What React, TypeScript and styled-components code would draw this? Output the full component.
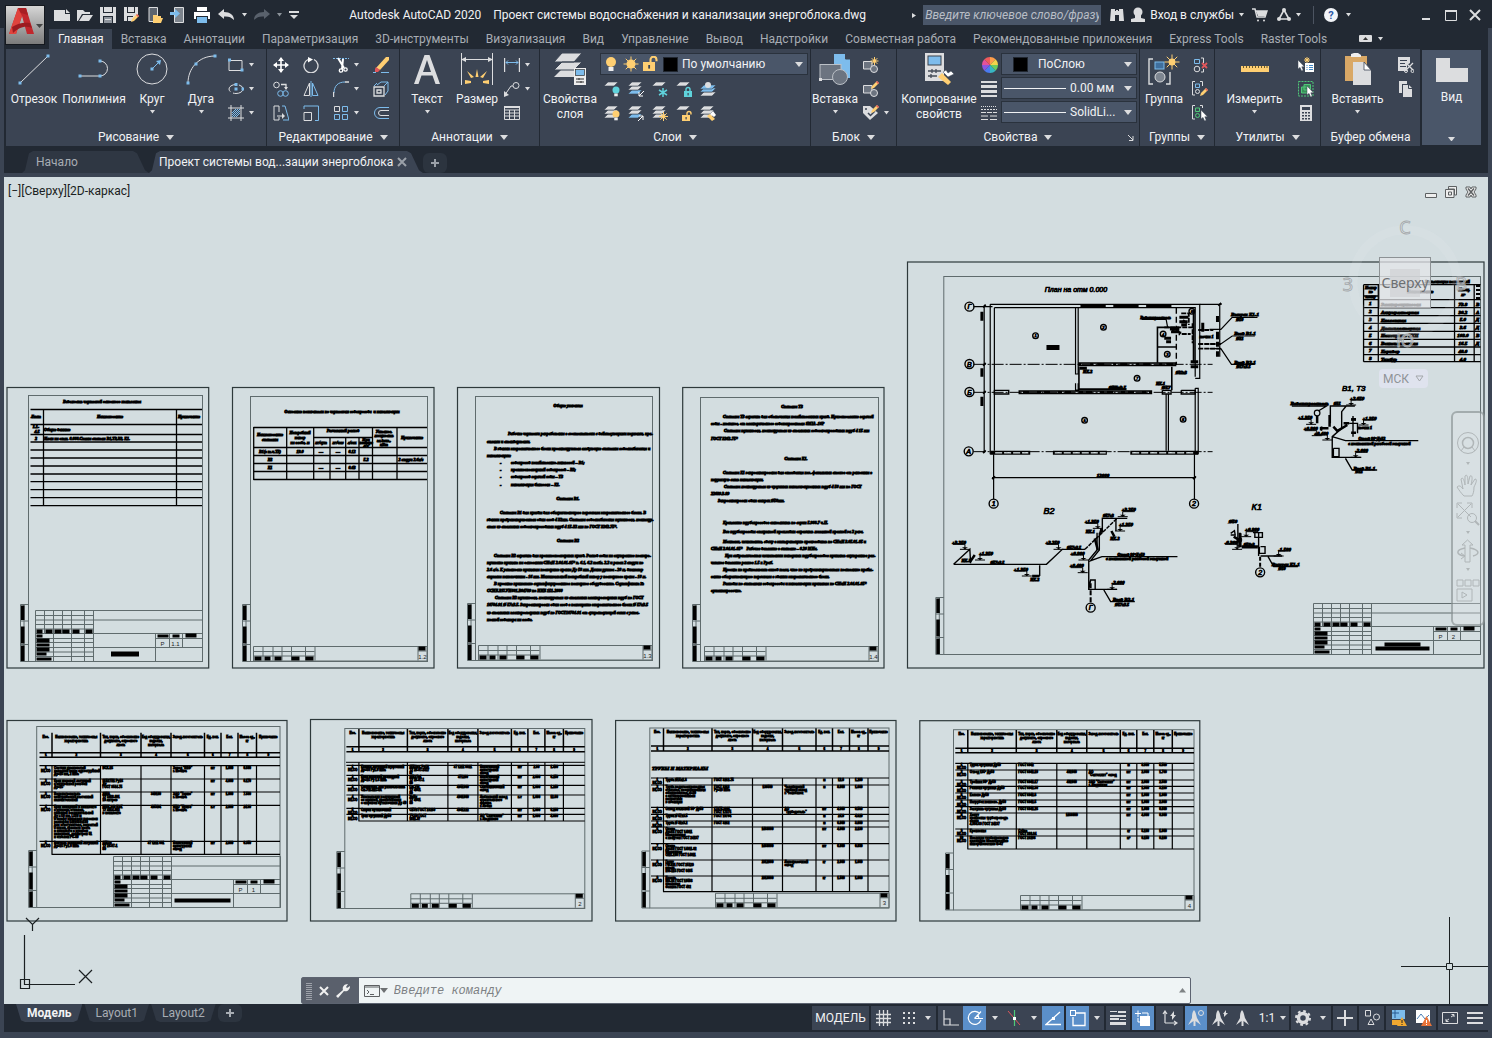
import React from "react";
import styled, { createGlobalStyle, css } from "styled-components";

const c = {
  dark: "#222933",
  panel: "#3b4453",
  field: "#4a5669",
  text: "#f1f2f4",
  muted: "#a8adb4",
  icon: "#dcdddf",
  blue: "#7dbcec",
  yellow: "#ffcf72",
  teal: "#5fd3dc",
  green: "#4fc878",
  red: "#e0565b",
  active: "#5b8fc9",
  canvas: "#d3dde0",
  thin: "#5f6b6d",
};

const GlobalStyle = createGlobalStyle`
  * { box-sizing: border-box; }
  body { margin: 0; background: ${c.dark}; font-family: Roboto, "Noto Sans", sans-serif; font-size: 12px; line-height: 16px; color: ${c.text}; }
  button, input, select { font: inherit; color: inherit; }
  svg { display: block; flex: none; }
`;

/* ---------- shell ---------- */

const Window = styled.div`
  display: flex;
  flex-direction: column;
  height: 100vh;
  min-height: 700px;
  padding: 0 4px 6px;
  background: linear-gradient(${c.dark}, ${c.dark}) top / 100% 28px no-repeat, ${c.panel};
`;

const Header = styled.header`
  display: grid;
  grid-template-columns: 45px 1fr;
  grid-template-rows: 29px 20px;
  background: ${c.dark};
`;

const bare = css`
  border: 0;
  padding: 0;
  margin: 0;
  background: none;
  cursor: default;
`;

const AppButton = styled.button`
  ${bare}
  grid-row: 1 / 3;
  width: 40px;
  height: 40px;
  margin: 5px 0 0 1px;
  border: 1px solid #15191f;
  background: linear-gradient(#d6d6d6, #7b7b7b);
`;

const TitleRow = styled.div`
  display: flex;
  justify-content: space-between;
  align-items: center;
  padding: 1px 0 0 1px;
  min-width: 0;
`;

const QuickBar = styled.div`
  display: flex;
  align-items: center;
  width: 253px;
`;

const ToolBtn = styled.button<{ $w?: number }>`
  ${bare}
  display: flex;
  align-items: center;
  justify-content: center;
  width: ${(p) => p.$w ?? 24}px;
  height: 24px;
`;

const Title = styled.h1`
  display: flex;
  gap: 12px;
  margin: 0;
  font-size: 12px;
  font-weight: 400;
  white-space: nowrap;
`;

const TitleTools = styled.div`
  display: flex;
  align-items: center;
  height: 29px;
  padding-right: 1px;
`;

const SearchBox = styled.input`
  width: 178px;
  height: 20px;
  margin: 0 4px 0 6px;
  padding: 0 2px;
  border: 0;
  background: ${c.field};
  font-style: italic;
  &::placeholder { color: #b9bec6; opacity: 1; }
`;

const SignIn = styled.button`
  ${bare}
  display: flex;
  align-items: center;
  gap: 5px;
  white-space: nowrap;
`;

const Divider = styled.span`
  width: 1px;
  height: 18px;
  margin: 0 8px;
  background: #4c5461;
`;

const WinButtons = styled.div`
  display: flex;
  margin-left: 58px;
`;

const TabRow = styled.nav`
  display: flex;
  align-items: stretch;
`;

const RibbonTab = styled.button<{ $on?: boolean }>`
  ${bare}
  padding: 0 8px 0 9px;
  white-space: nowrap;
  color: ${(p) => (p.$on ? c.text : c.muted)};
  background: ${(p) => (p.$on ? c.panel : "transparent")};
`;

const BadgeTab = styled.button`
  ${bare}
  display: flex;
  align-items: center;
  gap: 6px;
  margin-left: 24px;
`;

/* ---------- ribbon ---------- */

const Ribbon = styled.section`
  display: flex;
  gap: 1px;
  height: 97px;
  padding-left: 2px;
  background: ${c.dark};
`;

const Panel = styled.div<{ $w: number }>`
  display: flex;
  flex-direction: column;
  flex: 0 0 ${(p) => p.$w}px;
  background: ${c.panel};
  min-width: 0;
`;

const PanelBody = styled.div`
  display: flex;
  height: 79px;
  padding-top: 4px;
`;

const PanelTitle = styled.div`
  position: relative;
  display: flex;
  align-items: center;
  justify-content: center;
  gap: 7px;
  height: 18px;
  white-space: nowrap;
`;

const Launcher = styled.span`
  position: absolute;
  right: 5px;
  bottom: 5px;
`;

const BigBtn = styled.button<{ $w: number }>`
  ${bare}
  display: flex;
  flex-direction: column;
  align-items: center;
  width: ${(p) => p.$w}px;
  line-height: 15px;
`;

const BigLabel = styled.span`
  margin: 7px 0 3px;
  white-space: pre;
  text-align: center;
`;

const SmallGrid = styled.div<{ $cols: string; $pad?: number }>`
  display: grid;
  grid-template-columns: ${(p) => p.$cols};
  grid-auto-rows: 24px;
  align-content: start;
  padding-left: ${(p) => p.$pad ?? 0}px;
`;

const SmallBtn = styled.button`
  ${bare}
  display: flex;
  align-items: center;
  gap: 5px;
  height: 24px;
  padding: 0 4px;
`;

const RowIcon = styled.span`
  display: flex;
  align-items: center;
  height: 24px;
`;

const Column = styled.div`
  display: flex;
  flex-direction: column;
`;

const Combo = styled.div<{ $w: number }>`
  display: flex;
  align-items: center;
  gap: 4px;
  width: ${(p) => p.$w}px;
  height: 22px;
  margin-bottom: 2px;
  padding: 0 4px 0 2px;
  border: 1px solid #2a323d;
  background: ${c.field};
`;

const Select = styled.select`
  flex: 1;
  min-width: 0;
  appearance: none;
  border: 0;
  padding: 0;
  background: transparent;
  text-overflow: ellipsis;
`;

const Swatch = styled.span<{ $inset?: boolean }>`
  flex: none;
  width: 15px;
  height: 15px;
  margin: ${(p) => (p.$inset ? "0 6px 0 9px" : "0")};
  background: #000;
  border: 1px solid #20262f;
`;

const LineSample = styled.span`
  flex: none;
  width: 62px;
  height: 1px;
  background: ${c.text};
`;

const ViewPanel = styled.button`
  ${bare}
  display: flex;
  flex-direction: column;
  align-items: center;
  justify-content: space-between;
  width: 59px;
  height: 95px;
  margin: 1px 0 0 1px;
  padding: 7px 0 4px;
  background: ${c.field};
`;

const ViewTop = styled.span`
  display: flex;
  flex-direction: column;
  align-items: center;
`;

/* ---------- file tabs ---------- */

const FileTabs = styled.nav`
  display: flex;
  align-items: flex-end;
  height: 31px;
  padding-left: 18px;
  background: ${c.dark};
  border-bottom: 4px solid ${c.panel};
`;

const FileTab = styled.button<{ $on?: boolean; $w: number }>`
  ${bare}
  display: flex;
  align-items: center;
  gap: 4px;
  width: ${(p) => p.$w}px;
  height: 22px;
  padding-left: ${(p) => (p.$on ? 10 : 14)}px;
  white-space: nowrap;
  color: ${(p) => (p.$on ? c.text : c.muted)};
  background: ${(p) => (p.$on ? c.panel : "#2f3743")};
  clip-path: polygon(0 100%, 3px 88%, 7px 10%, 11px 0, calc(100% - 16px) 0, calc(100% - 12px) 10%, calc(100% - 4px) 88%, 100% 100%);
`;

const AddTab = styled.button<{ $h: number }>`
  ${bare}
  display: flex;
  align-items: center;
  justify-content: center;
  width: 24px;
  height: ${(p) => p.$h}px;
  background: #2c343f;
  border-radius: 6px;
`;

/* ---------- canvas ---------- */

const Canvas = styled.main`
  position: relative;
  flex: 1;
  min-height: 0;
  overflow: hidden;
  background: ${c.canvas};
`;

const Drawing = styled.svg`
  position: absolute;
  inset: 0;
  width: 100%;
  height: 100%;
`;

const ViewLabel = styled.div`
  position: absolute;
  left: 4px;
  top: 6px;
  color: #1b1f22;
`;

const DocButtons = styled.div`
  position: absolute;
  right: 10px;
  top: 8px;
  display: flex;
  gap: 6px;
`;

const DocBtn = styled.button`
  ${bare}
`;

const CubeWrap = styled.div`
  position: absolute;
  right: 13px;
  top: 35px;
`;

const CubeText = styled.text<{ $size?: number }>`
  font: ${(p) => p.$size ?? 18}px "Noto Sans", sans-serif;
  text-anchor: middle;
`;

const Ucs = styled.button`
  ${bare}
  position: absolute;
  right: 60px;
  top: 192px;
  display: flex;
  align-items: center;
  gap: 6px;
  height: 19px;
  padding: 0 4px;
  border-radius: 4px;
  background: #dfe3ee;
  color: #8f9397;
`;

const NavBar = styled.nav`
  position: absolute;
  right: 3px;
  top: 234px;
  display: flex;
  flex-direction: column;
  align-items: center;
  width: 34px;
  height: 215px;
  padding-top: 18px;
  border: 2px solid rgba(110, 120, 122, 0.5);
  border-radius: 6px;
  background: rgba(225, 230, 232, 0.35);
`;

const NavBtn = styled.button<{ $h: number }>`
  ${bare}
  display: flex;
  align-items: center;
  justify-content: center;
  width: 30px;
  height: ${(p) => p.$h}px;
`;

const CommandDock = styled.div`
  position: absolute;
  left: 0;
  right: 0;
  bottom: 0;
  display: flex;
  justify-content: center;
`;

const CommandLine = styled.label`
  display: flex;
  align-items: center;
  width: 60%;
  height: 27px;
  padding-right: 4px;
  border: 1px solid #5c6370;
  border-radius: 2px;
  background: #eff4f5;
`;

const CommandGrip = styled.span`
  display: flex;
  align-items: center;
  gap: 7px;
  width: 57px;
  height: 100%;
  margin-right: 5px;
  padding-left: 4px;
  background: #5a606c;
`;

const CommandInput = styled.input`
  flex: 1;
  margin-left: 6px;
  padding: 0;
  border: 0;
  outline: 0;
  background: transparent;
  font: italic 12px "Liberation Mono", monospace;
  color: #333;
  &::placeholder { color: #7d8184; opacity: 1; }
`;

/* ---------- status bar ---------- */

const StatusBar = styled.footer`
  display: flex;
  justify-content: space-between;
  height: 28px;
  padding-left: 12px;
  background: ${c.dark};
`;

const LayoutTabs = styled.div`
  display: flex;
  gap: 2px;
`;

const LayoutTab = styled.button<{ $on?: boolean }>`
  ${bare}
  height: 18px;
  padding: 0 11px;
  font-weight: ${(p) => (p.$on ? 700 : 400)};
  color: ${(p) => (p.$on ? c.text : c.muted)};
  background: ${(p) => (p.$on ? c.panel : "#2f3743")};
  clip-path: polygon(0 0, 100% 0, calc(100% - 5px) 90%, calc(100% - 9px) 100%, 9px 100%, 5px 90%);
`;

const StatusTools = styled.div`
  display: flex;
  gap: 2px;
  padding-top: 2px;
`;

const StatusGroup = styled.div`
  display: flex;
  height: 24px;
  background: ${c.panel};
`;

const StatusBtn = styled.button<{ $w: number; $on?: boolean }>`
  ${bare}
  display: flex;
  align-items: center;
  justify-content: center;
  gap: 5px;
  width: ${(p) => p.$w}px;
  height: 24px;
  white-space: nowrap;
  background: ${(p) => (p.$on ? c.active : "transparent")};
`;

/* ---------- icons ---------- */

type IconProps = { s?: number; children: React.ReactNode; stroke?: string };
const Icon = ({ s = 16, children, stroke = c.icon }: IconProps) => (
  <svg width={s} height={s} viewBox={`0 0 ${s} ${s}`} fill="none" stroke={stroke} aria-hidden="true">
    {children}
  </svg>
);

const Caret = ({ w = 6, color = c.icon, up }: { w?: number; color?: string; up?: boolean }) => (
  <svg width={w} height={w / 2 + 1} viewBox={`0 0 ${w} ${w / 2 + 1}`} aria-hidden="true">
    <path d={up ? `M0 ${w / 2 + 1}H${w}L${w / 2} 0Z` : `M0 0H${w}L${w / 2} ${w / 2 + 1}Z`} fill={color} />
  </svg>
);

const solid = { fill: c.icon, stroke: "none" };
const blueFill = { fill: c.blue, stroke: "none" };
const yellowFill = { fill: c.yellow, stroke: "none" };
const Node = ({ x, y, r = 1.5 }: { x: number; y: number; r?: number }) => (
  <rect x={x - r} y={y - r} width={r * 2} height={r * 2} fill={c.blue} stroke="none" />
);
const Sheet = ({ y, fill = c.icon, x = 0, w = 14 }: { y: number; fill?: string; x?: number; w?: number }) => (
  <path d={`M${x} ${y + 4}L${x + 4} ${y}H${x + w}L${x + w - 4} ${y + 4}Z`} fill={fill} stroke={c.panel} strokeWidth="0.6" />
);
const Pencil = ({ x = 0, y = 0 }: { x?: number; y?: number }) => (
  <g transform={`translate(${x} ${y})`} stroke="none">
    <path d="M0 8L1 5L6 0L8 2L3 7Z" fill={c.yellow} />
    <path d="M5 1L6 0L8 2L7 3Z" fill={c.red} />
  </g>
);
const Burst = ({ x, y, r }: { x: number; y: number; r: number }) => (
  <g stroke={c.yellow}>
    <circle cx={x} cy={y} r={r / 2.2} fill={c.yellow} stroke="none" />
    <path d={`M${x - r} ${y}H${x + r}M${x} ${y - r}V${y + r}M${x - r * 0.7} ${y - r * 0.7}L${x + r * 0.7} ${y + r * 0.7}M${x - r * 0.7} ${y + r * 0.7}L${x + r * 0.7} ${y - r * 0.7}`} />
  </g>
);
const Cursor = ({ x, y }: { x: number; y: number }) => (
  <path transform={`translate(${x} ${y})`} d="M0 0V9L2 7.4L3.6 11L5.2 10.3L3.8 6.8H6.5Z" fill="#fff" stroke={c.panel} strokeWidth="0.5" />
);
const Lock = ({ x, y, fill, open }: { x: number; y: number; fill: string; open?: boolean }) => (
  <g transform={`translate(${x} ${y})`}>
    <path d={open ? "M5 4V2.5A2 2 0 0 1 9 2.5V3.5" : "M2 4V2.5A2 2 0 0 1 6 2.5V4"} stroke={fill} strokeWidth="1.4" />
    <rect y="4" width="8" height="6" fill={fill} stroke="none" />
    <rect x="3.5" y="6" width="1.2" height="2.4" fill={c.panel} stroke="none" />
  </g>
);
const Bulb = ({ x, y, fill, r = 3.5 }: { x: number; y: number; fill: string; r?: number }) => (
  <g stroke="none">
    <circle cx={x} cy={y} r={r} fill={fill} />
    <rect x={x - r / 2} y={y + r} width={r} height={r * 0.8} fill="#eee" />
  </g>
);

const AcadLogo = () => (
  <svg width="38" height="38" viewBox="0 0 38 38" aria-hidden="true">
    <path d="M3 28L12 2H20L28 28H21L16 10L10 28Z" fill="#c1272d" />
    <path d="M3 28L12 2L16 10L10 28Z" fill="#e0443e" />
    <path d="M6 21C12 17 18 16 24 17L26 22C19 19 12 22 7 27Z" fill="#9c1b20" />
    <path d="M12 2H20L22 9L15 7Z" fill="#a81f24" />
    <path d="M30 18H37L33.500 22Z" fill="#444" />
  </svg>
);

const icons = {
  newFile: <Icon><path {...solid} d="M0 3H11V7H16V14H0Z" /><path {...solid} d="M12 2L16 6H12Z" /></Icon>,
  open: <Icon><path {...solid} d="M0 14V3H6L8 5H13V7H5L1 14Z" /><path {...solid} d="M6 8H16L12 14H2Z" /></Icon>,
  save: <Icon><path {...solid} d="M0 0H16V16H0Z" /><path fill={c.dark} stroke="none" d="M3 0H4V5H12V0H13V6H3ZM3 9H13V10H4V16H3ZM12 10H13V16H12Z" /><path fill="#8e949c" stroke="none" d="M4 10H12V16H4Z" /><path {...solid} d="M5 12H11V13H5Z" /></Icon>,
  saveAs: <Icon><path {...solid} d="M0 0H14V8L8 14H0Z" /><path fill={c.dark} stroke="none" d="M3 0H4V5H10V0H11V6H3ZM3 9H9V10H4V14H3Z" /><Pencil x={7} y={7} /></Icon>,
  openMobile: <Icon><path fill="#5d646e" stroke={c.icon} d="M2 0.500H10.500V14.500H2Z" /><path {...yellowFill} d="M6 8H10L11 9H14V11H16L14 16H6Z" /></Icon>,
  saveMobile: <Icon><path fill="#7d848d" stroke={c.icon} d="M4.500 0.500H13.500V15.500H4.500Z" /><path {...blueFill} d="M0 5H5V2L10 6.500L5 11V8H0Z" /></Icon>,
  print: <Icon><path fill="#fff" stroke="none" d="M3 0H13V4H3ZM0 5H16V12H14V9H2V12H0Z" /><path {...blueFill} d="M3 10H13V16H3Z" /></Icon>,
  undo: <Icon><path {...solid} d="M0 7L6 2V5C12 5 16 8 16 13C13 10 10 9 6 9.500V12Z" /></Icon>,
  redo: <Icon><path fill="#59616c" stroke="none" d="M16 7L10 2V5C4 5 0 8 0 13C3 10 6 9 10 9.500V12Z" /></Icon>,
  custom: <Icon s={10}><path {...solid} d="M0 1H10V3H0ZM1 5H9L5 9Z" /></Icon>,
  line: <Icon s={32}><path d="M2 30L30 3" /><Node x={2} y={30} /><Node x={30} y={3} /></Icon>,
  polyline: <Icon s={32}><path d="M2 23H22M22 23A7 7 0 0 0 22 8" /><Node x={2} y={23} /><Node x={22} y={23} /><Node x={22} y={8} /></Icon>,
  circle: <Icon s={32}><circle cx="16" cy="16" r="15" /><path d="M16 16L23 9" stroke={c.blue} /><path d="M25 7L24 12L20 8Z" {...blueFill} /><Node x={16} y={16} /></Icon>,
  arc: <Icon s={32}><path d="M3 30C3 16 13 3 30 3" /><Node x={3} y={30} /><Node x={11} y={11} /><Node x={30} y={3} /></Icon>,
  rect: <Icon><path d="M1 3.500H14V13.500H1Z" /><Node x={1.5} y={3} /><Node x={14} y={13} /></Icon>,
  ellipse: <Icon><ellipse cx="8" cy="8" rx="7" ry="4.500" strokeDasharray="12 3" /><Node x={8} y={8} /><Node x={8} y={3.500} /><Node x={15} y={8} /></Icon>,
  hatch: <Icon><path d="M0 3H16M0 13H16M3 0V16M13 0V16" /><path d="M4 8L8 4M4 12L12 4M8 12L12 8M4 10L10 4M6 12L12 6" stroke={c.blue} /></Icon>,
  move: <Icon><path stroke="#fff" strokeWidth="1.600" d="M1 8H15M8 1V15" /><path fill="#fff" stroke="none" d="M8 0L11 4H5ZM8 16L11 12H5ZM0 8L4 5V11ZM16 8L12 5V11Z" /></Icon>,
  rotate: <Icon><path strokeWidth="1.300" d="M5 2.500A7 7 0 1 0 11 2.500" /><path d="M5 0L10 2.500L5 5.500" fill="#fff" stroke="none" /></Icon>,
  trim: <Icon><path stroke={c.blue} strokeDasharray="2 1" d="M0 1.500H16" /><path stroke="#fff" strokeWidth="2" d="M5 1L11 11M10 2L9 12" /><circle cx="8" cy="13.500" r="1.700" stroke="#fff" strokeWidth="1.300" /><circle cx="12.500" cy="12.500" r="1.700" stroke="#fff" strokeWidth="1.300" /></Icon>,
  erase: <Icon><path {...yellowFill} d="M3 11L13 0H16V3L7 13Z" /><path fill={c.red} stroke="none" d="M3 10L7 13L5 15H2V12Z" /><path stroke={c.blue} d="M0 15.500H3M8 15.500H16" /></Icon>,
  copy: <Icon><circle cx="3.500" cy="4" r="2.800" /><path d="M8 3.500H13V8" strokeWidth="1.300" /><path {...solid} d="M11 6H15L13 9Z" /><circle cx="7.500" cy="12.500" r="2.800" stroke={c.blue} /><circle cx="12.500" cy="12.500" r="2.800" stroke={c.blue} /></Icon>,
  mirror: <Icon><path d="M6.500 2V14.500H1Z" /><path stroke={c.blue} d="M9.500 2V14.500H15ZM8 0V16" /></Icon>,
  fillet: <Icon><path stroke={c.blue} d="M1 12C1 5 5 1 12 1" /><path d="M12 1H16M0.500 11V16" strokeWidth="1.400" /></Icon>,
  explode: <Icon stroke={c.blue}><path d="M4 4L8 1H15V10L12 14M11 5L15 1M1 5L4 2" /><path stroke={c.icon} strokeWidth="1.300" d="M1 6H11V15H1ZM4 9H8V12H4Z" /></Icon>,
  stretch: <Icon><path d="M6 12V15H1V1H6V7M4 11H10" /><path {...solid} d="M9 8L12 11L9 14Z" /><path stroke={c.blue} d="M9 1H12L16 15H10" /></Icon>,
  scale: <Icon><path stroke={c.blue} d="M1 4V1H15.500V15.500H12" /><path d="M1 7.500H8.500V15.500H1Z" /></Icon>,
  array: <Icon stroke={c.blue}><path stroke={c.icon} d="M1.500 1.500H6.500V6.500H1.500Z" /><path d="M9.500 1.500H14.500V6.500H9.500ZM1.500 9.500H6.500V14.500H1.500ZM9.500 9.500H14.500V14.500H9.500Z" /></Icon>,
  offset: <Icon><path stroke={c.blue} d="M16 2.500H7A5.500 5.500 0 0 0 7 13.500H16" /><path d="M16 5.500H8A2.500 2.500 0 0 0 8 10.500H16" /></Icon>,
  text: <Icon s={32}><path {...solid} d="M3 31L13.500 2H18.500L29 31H24.500L21.500 22.500H10.500L7.500 31ZM12 19H20L16 7Z" fillRule="evenodd" /></Icon>,
  dimension: <Icon s={32}><path d="M0.500 0V32M31.500 0V32M2 6.500H30" /><path {...solid} d="M0 6.500L5 4V9ZM32 6.500L27 4V9Z" /><path {...yellowFill} d="M14.500 24L16 16L17.500 24ZM10 25L6 18L13 24ZM19 24L26 18L22 25ZM4 27L10 28V30L4 31ZM28 27L22 28V30L28 31Z" /></Icon>,
  linear: <Icon><path d="M0.500 1V15M15.500 1V15" strokeWidth="1.400" /><path stroke={c.blue} d="M2 5.500H14M4 3.500L2 5.500L4 7.500M12 3.500L14 5.500L12 7.500" /></Icon>,
  leader: <Icon><path d="M1.500 13L7 5H9" /><circle cx="12" cy="4.500" r="3" /><path {...solid} d="M0 16V10L5 14Z" /></Icon>,
  table: <Icon><path d="M0.500 1.500H15.500V14.500H0.500ZM0 5H16M0 8H16M0 11H16M5.500 5V14M10.500 5V14" /><path {...solid} d="M0 1H16V3H0Z" /></Icon>,
  layerProps: <Icon s={32}><path {...solid} d="M0 24L7 17H27L20 24Z" /><path fill={c.icon} stroke={c.panel} d="M0 17L8 9H28L20 17ZM0 9L8 0H28L20 9Z" /><rect x="20" y="15" width="12" height="17" fill="#eee" stroke="none" /><rect x="21.500" y="16.500" width="9" height="6" fill={c.blue} stroke="#333" strokeWidth="0.700" /><path stroke="#333" d="M22 26H30M22 29H30M25 25V27M27 28V30" /></Icon>,
  blockInsert: <Icon s={32}><g transform="translate(-2 1)"><path {...blueFill} d="M17 0H28V5H33V24H17Z" /><path d="M28.500 0V5H33" stroke={c.panel} /><rect x="3" y="10.500" width="21" height="15" fill="#6c7480" stroke="#bbc0c6" /><circle cx="23" cy="23" r="7.500" fill="#6c7480" stroke="#bbc0c6" /><path {...solid} d="M2 24H5V27H2Z" /></g></Icon>,
  blockNew: <Icon><path fill="#6c7480" d="M0.500 4.500H9V12H0.500Z" /><circle cx="11" cy="12" r="3.500" fill="#6c7480" /><Burst x={11.5} y={4} r={4} /></Icon>,
  blockEdit: <Icon><path fill="#6c7480" d="M0.500 4.500H9V12H0.500Z" /><circle cx="11" cy="12" r="3.500" fill="#6c7480" /><Pencil x={8} /></Icon>,
  blockAttr: <Icon><path {...solid} d="M0 1H7L15 8L7 15L0 8Z" /><circle cx="3" cy="4" r="1" fill={c.panel} stroke="none" /><path stroke={c.panel} strokeWidth="1.500" d="M5 8L7.500 10.500L12 6" /><Pencil x={8} /></Icon>,
  match: <Icon s={32}><rect x="2" y="0" width="19" height="28" fill={c.icon} stroke="none" /><rect x="5" y="3" width="13" height="9" fill={c.blue} stroke="#3a424d" /><path stroke="#444c57" d="M5 18H18M5 23H14M9 16V20M13 16V20M8 21V25" strokeWidth="1.300" /><path {...yellowFill} d="M15 24L19 20L28 29L25 32Z" /><path fill="#fff" stroke={c.panel} strokeWidth="0.500" d="M20 19L25 24L31 21L28 18L25 20L23 17Z" /></Icon>,
  color: (
    <Icon s={18}>
      {["#ff9e4a", "#f4d34b", "#6ccb5f", "#38b6c4", "#4a7bf0", "#8c55e0", "#e5529a", "#ef5b5b"].map((f, i) => {
        const a = (i * Math.PI) / 4 - Math.PI / 2;
        const b = a + Math.PI / 4;
        return <path key={f} fill={f} stroke="none" d={`M9 9L${9 + 8 * Math.cos(a)} ${9 + 8 * Math.sin(a)}A8 8 0 0 1 ${9 + 8 * Math.cos(b)} ${9 + 8 * Math.sin(b)}Z`} />;
      })}
    </Icon>
  ),
  weight: <Icon><path {...solid} d="M0 0H16V2H0ZM0 4H16V7H0ZM0 9H16V12H0ZM0 14H16V16H0Z" /></Icon>,
  ltype: <Icon><path d="M0 1.500H16" strokeDasharray="1 1" /><path d="M0 4.500H16" strokeDasharray="2 1" /><path d="M0 7.500H16" strokeDasharray="5 1" /><path d="M0 11H16M0 14.500H16" strokeDasharray="7 2" /></Icon>,
  group: <Icon s={32}><path strokeWidth="1.400" d="M5 6H1V31H5M18 31H22V19" /><rect x="7" y="9" width="9" height="7" fill="#3f6f9e" stroke={c.blue} /><circle cx="12" cy="24" r="5" fill="#7d8590" /><Burst x={24} y={9} r={7.500} /></Icon>,
  ungroup: <Icon><path stroke={c.blue} d="M2.500 2.500H7.500V6.500H2.500Z" /><path d="M9 1H11.500V6M11.500 12V15H9" /><circle cx="5" cy="12" r="2.800" /><path stroke={c.red} strokeWidth="1.800" d="M10 6L15 11M15 6L10 11" /></Icon>,
  groupEdit: <Icon><path d="M3 0.500H0.500V14H3M8 0.500H10.500V5" /><path stroke={c.blue} d="M3.500 3H7.500V6.500H3.500Z" /><circle cx="5.500" cy="10.500" r="2" /><Pencil x={8} y={7} /></Icon>,
  groupSel: <Icon><path d="M3 0.500H0.500V14H3M8 0.500H10.500V3" /><path stroke={c.green} d="M3.500 3H7.500V6.500H3.500Z" /><circle cx="5.500" cy="10.500" r="2" stroke={c.green} /><Cursor x={9} y={5} /></Icon>,
  ruler: <Icon s={32}><path {...yellowFill} d="M2 13H30V19H2Z" /><path stroke="#6b5a2a" d="M4.500 13V15M7.500 13V15M10.500 13V15M13.500 13V15M16.500 13V15M19.500 13V15M22.500 13V15M25.500 13V15M28 13V15" /></Icon>,
  quickSel: <Icon><Burst x={9} y={3} r={3} /><rect x="7" y="6" width="9" height="9" fill="#fff" stroke="none" /><path stroke="#3f87c7" d="M8.500 8.500H9.500M11 8.500H15M8.500 10.500H9.500M11 10.500H15M8.500 12.500H9.500M11 12.500H15" /><Cursor x={0} y={3} /></Icon>,
  selAll: <Icon stroke={c.green}><path strokeDasharray="2 1" d="M0.500 0.500H15V15H0.500Z" /><path fill="#3a8f5a" d="M3.500 6H10V12H3.500ZM6 3.500H12.500V9H6Z" /><Cursor x={9} y={5} /></Icon>,
  calc: <Icon><path {...solid} d="M2 0H14V16H2Z" /><path fill={c.panel} stroke="none" d="M4 2H12V5H4ZM4 7H6V8.500H4ZM7 7H9V8.500H7ZM10 7H12V8.500H10ZM4 10H6V11.500H4ZM7 10H9V11.500H7ZM10 10H12V11.500H10ZM4 13H6V14.500H4ZM7 13H9V14.500H7ZM10 13H12V14.500H10Z" /></Icon>,
  paste: <Icon s={32}><path fill="#d9a866" stroke="none" d="M3 3H25V12H12V28H3Z" /><path fill="#eee" stroke="none" d="M9 4V1L12 0H16L19 2V4Z" /><path {...solid} d="M11 9H22L29 17V32H11Z" /><path fill="#fff" stroke={c.panel} strokeWidth="0.800" d="M22 9V17H29Z" /></Icon>,
  cut: <Icon><path {...solid} d="M0 0H12V6L9 8V14H0Z" /><path stroke={c.panel} d="M2 3.500H9M2 6.500H7M2 9.500H8" /><path strokeWidth="1.300" d="M8 6L15 13M15 6L8 13" /><circle cx="8" cy="14" r="1.500" /><circle cx="14.500" cy="14" r="1.500" /></Icon>,
  copyClip: <Icon><path {...solid} d="M1 0H9V3H4V12H1Z" /><path {...solid} d="M5 4H11L14 7V16H5Z" /><path stroke={c.panel} d="M10.500 4V7.500H14" /></Icon>,
  view: <Icon s={32}><path {...solid} d="M0 1H14V11H32V25H0Z" /></Icon>,
};

const layerIcons = [
  <><Sheet y={1} /><Bulb x={12} y={9} fill={c.teal} r={3.500} /></>,
  <><Sheet y={9} fill={c.blue} /><Sheet y={5} /><Sheet y={1} /><path d="M16 10L11 15M11 11V15H15" stroke="#fff" /></>,
  <><Sheet y={1} /><path stroke={c.teal} strokeWidth="1.500" d="M11 7V16M7 9L15 14M15 9L7 14" /></>,
  <><Sheet y={1} /><Lock x={8} y={6} fill={c.teal} /></>,
  <><Sheet y={11} x={0} w={16} /><Sheet y={7} w={16} fill={c.blue} /><Sheet y={4} w={16} fill={c.blue} /><circle cx="8" cy="4" r="3" {...solid} /></>,
  <><Sheet y={9} /><Sheet y={5} /><Sheet y={1} /><Bulb x={12} y={9} fill={c.yellow} r={3.500} /></>,
  <><Sheet y={9} fill={c.blue} /><Sheet y={5} /><Sheet y={1} /><path d="M10 16L15 11M15 15V11H11" stroke="#fff" /></>,
  <><Sheet y={9} /><Sheet y={5} /><Sheet y={1} /><Burst x={11.5} y={11.5} r={4.500} /></>,
  <><Sheet y={1} /><Lock x={6} y={6} fill={c.yellow} open /></>,
  <><Sheet y={9} /><Sheet y={5} /><Sheet y={1} /><path {...yellowFill} d="M7 11L10 9L15 14L12 16Z" /><path fill="#fff" stroke="none" d="M10 9L13 6L16 10L14 12Z" /></>,
];

/* ---------- drawing ---------- */

const Tiny = styled.text<{ $anchor?: string; $size?: number }>`
  font: italic bold ${(p) => p.$size ?? 4}px "Liberation Serif", serif;
  text-anchor: ${(p) => p.$anchor ?? "start"};
  fill: #000;
  stroke: #000;
  stroke-width: 1px;
  white-space: pre;
`;

const Cell = styled.text<{ $anchor?: string }>`
  font: bold 3px "Liberation Sans", sans-serif;
  text-anchor: ${(p) => p.$anchor ?? "start"};
  fill: #000;
  stroke: #000;
  stroke-width: 0.8px;
`;

const Label = styled.text<{ $size?: number }>`
  font: italic ${(p) => p.$size ?? 7}px "Liberation Sans", sans-serif;
  text-anchor: middle;
  fill: #000;
  stroke: #000;
  stroke-width: 0.7px;
`;

const Mark = styled.text`
  font: 6px "Liberation Sans", sans-serif;
  text-anchor: middle;
  fill: #1a2224;
`;

type Box = [number, number, number, number];

const Frame = ({ outer, inner }: { outer: Box; inner: Box }) => (
  <g fill="none">
    <rect x={outer[0]} y={outer[1]} width={outer[2] - outer[0]} height={outer[3] - outer[1]} stroke="#2e393b" strokeWidth="1.200" />
    <rect x={inner[0]} y={inner[1]} width={inner[2] - inner[0]} height={inner[3] - inner[1]} stroke={c.thin} />
    <g transform={`translate(${inner[0] - 8} ${inner[3] - 57})`}>
      <path stroke={c.thin} d="M8 0H0V57H8M0 16.500H8M0 40H8M3.500 0V57" />
      <path fill="#000" d="M0.500 1H4V15.500H0.500ZM0.500 22H4V39H0.500ZM0.500 41H4V56.500H0.500Z" />
    </g>
  </g>
);

const Bars = ({ list }: { list: Box[] }) => (
  <>
    {list.map(([x, y, w, h]) => (
      <rect key={`${x}-${y}`} x={x} y={y} width={w} height={h} fill="#000" />
    ))}
  </>
);

const bigStampBars: Box[] = [
  [1, 19, 6, 4], [10, 19, 7, 4], [19, 19, 7, 4], [27, 19, 7, 4], [37, 19, 7, 4], [50, 19, 7, 4],
  [1, 24, 6, 3], [1, 28, 13, 4], [1, 33, 13, 3], [1, 37, 13, 4], [1, 42, 10, 3], [1, 47, 15, 3],
  [122, 24, 11, 3], [137, 24, 7, 3], [150, 23, 11, 4],
];

const BigStamp = ({ x, y, page, bars }: { x: number; y: number; page: string; bars: Box[] }) => (
  <g transform={`translate(${x} ${y})`}>
    <path
      fill="none"
      stroke={c.thin}
      d="M0 0H167V51H0ZM9 0V23M18 0V51M27 0V23M36 0V51M49 0V51M58 0V51M0 5H58M0 9.500H167M0 14H58M0 18.500H58M0 23H167M0 28H58M0 32H58M0 37H167M0 41.500H58M0 46H58M120 23V51M120 28H167M134 23V37M147 23V37"
    />
    <Bars list={bigStampBars} />
    <Bars list={bars} />
    <Mark x="127" y="35">Р</Mark>
    <Mark x="140" y="35">{page}</Mark>
  </g>
);

const smallStampBars: Box[] = [
  [1, 10, 7, 4], [11, 10, 6, 4], [21, 10, 7, 4], [38, 10, 8, 4], [52, 10, 8, 4], [165, 0, 7, 4],
];

const SmallStamp = ({ x, y, page }: { x: number; y: number; page: string }) => (
  <g transform={`translate(${x} ${y})`}>
    <path fill="none" stroke={c.thin} d="M0 0H173.500V14.500H0ZM9.500 0V14M19.500 0V14M28.500 0V14M38 0V14M52 0V14M61.500 0V14M0 5H61M0 9.500H61M164.500 0V14M164.500 4.500H173" />
    <Bars list={smallStampBars} />
    <Mark x="169" y="12">{page}</Mark>
  </g>
);

type Ln = [number, number, string, string?];
const Lines = ({ list }: { list: Ln[] }) => (
  <>
    {list.map(([x, y, t, a]) => (
      <Tiny key={`${x}-${y}-${t}`} x={x} y={y} $anchor={a}>{t}</Tiny>
    ))}
  </>
);

const sheet1: Ln[] = [
  [102, 403, "Ведомость чертежей основного комплекта", "middle"],
  [36, 418, "Лист", "middle"], [110, 418, "Наименование", "middle"], [189, 418, "Примечание", "middle"],
  [36, 428, "1.1-", "middle"], [37, 433, "4.5", "middle"], [44, 431, "Общие данные"],
  [36, 440, "2", "middle"], [44, 440, "План на отм. 0.000.Схемы систем В1,Т3,В2, К1."],
];

const sheet2: Ln[] = [
  [342, 413, "Основные показатели по чертежам водопровода  и канализации", "middle"],
  [270, 436, "Наименование", "middle"], [270, 441, "системы", "middle"],
  [300, 434, "Потребный", "middle"], [300, 439, "напор", "middle"], [300, 444, "на вводе, м", "middle"],
  [343, 432, "Расчетный расход", "middle"], [321, 444, "м³/сут", "middle"], [338, 444, "м³/час", "middle"], [352, 444, "л/сек", "middle"],
  [366, 441, "При", "middle"], [366, 444, "пожаре", "middle"], [366, 447, "л/с", "middle"],
  [384, 433, "Установ.", "middle"], [384, 437, "мощность", "middle"], [384, 442, "эл.двиг.,", "middle"], [384, 446, "кВт", "middle"],
  [412, 439, "Примечание", "middle"],
  [270, 453, "В1(в т.ч.Т3)", "middle"], [300, 453, "19.0", "middle"], [321, 453, "—", "middle"], [338, 453, "—", "middle"], [352, 453, "0.12", "middle"],
  [270, 461, "В2", "middle"], [366, 461, "5.2", "middle"], [411, 461, "2 струи 2.6л/с", "middle"],
  [270, 469, "К1", "middle"], [321, 469, "—", "middle"], [338, 469, "—", "middle"], [352, 469, "0.63", "middle"],
];

const sheet3: Ln[] = [
  [568, 407, "Общие указания", "middle"],
  [508, 435, "Рабочие чертежи разработаны в соответствии с действующими нормами, пра-"], [487, 443, "вилами и стандартами."],
  [494, 450, "В здании энергетического блока проектируются следующие системы водоснабжения и"], [487, 457, "канализации:"],
  [500, 464, "-"], [511, 464, "водопровод хозяйственно-питьевой – В1;"], [500, 471, "-"], [511, 471, "противопожарный водопровод – В2;"],
  [500, 478, "-"], [511, 478, "водопровод горячей воды – Т3"], [500, 486, "-"], [511, 486, "канализация бытовая – К1."],
  [568, 500, "Система В1.", "middle"],
  [500, 514, "Система В1 для нужды для обслуживающего персонала энергетического блока. В"],
  [487, 521, "здании предусматривается один ввод d 32мм. Система водоснабжения тупиковая, монтиру-"],
  [487, 528, "ется из стальных водогазопроводных труб d 15-32 мм по ГОСТ 3262-75*."],
  [568, 542, "Система В2", "middle"],
  [494, 557, "Система В2 служит для противопожарных нужд. Расход воды на внутреннее пожаро-"],
  [487, 564, "тушение принят на основании СНиП 2.04.01-85* п. 6.1, 6.2 табл. 2.2 и равен 2 струи по"],
  [487, 571, "2.6 л/с. К установке приняты пожарные краны Ду 50 мм. Длина рукава - 20 м, диаметр"],
  [487, 578, "спрыска наконечника - 16 мм. Минимальный потребный напор у пожарного крана - 10 м."],
  [494, 585, "В проекте применено сертифицированное пожарное оборудование. Сертификат №"],
  [487, 592, "ССПБ.RU.УП001.В04789 по НПБ 151-2000"],
  [495, 599, "Система В2 тупиковая, монтируется из стальных электросварных труб по ГОСТ"],
  [487, 606, "10704-91 Ø 57х3.5. Запроектирован один ввод в помещение энергетического блока Ø 57х3.5"],
  [487, 614, "из стальных электросварных труб по ГОСТ10704-91 от существующей сети с уста-"],
  [487, 621, "новкой водомера на вводе."],
];

const sheet4: Ln[] = [
  [792, 408, "Система Т3", "middle"],
  [723, 418, "Система Т3 служит для обеспечения хозяйственных нужд. Приготовление горячей"],
  [711, 425, "воды - местное, от электрического водонагревателя SMIA -10P"],
  [724, 432, "Система тупиковая, монтируется из стальных водогазопроводных труб d 15 мм"], [711, 440, "ГОСТ 3262-75*"],
  [796, 460, "Система К1.", "middle"],
  [723, 474, "Система К1 запроектирована для отведения хоз.-фекальных стоков от раковины в"], [711, 481, "наружную сеть канализации."],
  [724, 488, "Система монтируется из чугунных канализационных труб d 50 мм по ГОСТ"], [711, 495, "22689.3-89"],
  [718, 502, "Запроектирован один выпуск Ø50мм."],
  [723, 524, "Крепление трубопроводов выполнить по серии 5.900-7 ч.II."],
  [723, 533, "Все трубопроводы открытой прокладки окрасить масляной краской за 2 раза."],
  [723, 543, "Монтаж, испытание, сдачу в эксплуатацию производить по СНиП 3.05.01-85 и"],
  [711, 550, "СНиП 2.04.01-85*    Рабочее давление в системе – 0.20 МПа."],
  [725, 557, "При гидравлическом испытании напорных трубопроводов принять внутреннее рас-"], [711, 564, "четное давление равное 1.5 х Рраб."],
  [723, 571, "Проект не предполагает вывод тела, что не предусматривается постоянно пребы-"], [711, 578, "вание обслуживающего персонала в здании энергетического блока."],
  [723, 585, "Расходы по системам водопровода и канализации приняты по СНиП 2.04.01-85*"], [711, 592, "ориентировочно."],
];

/* Specification sheets: columns are offsets from the table's left edge. */
const specCols = [0, 12.5, 61, 101.5, 131.5, 165, 181.5, 198.5, 217];
const specHead = ["Поз.", "Наименование, техническая/характеристика", "Тип, марка, обозначение/документа, опросного/листа", "Код оборудования,/изделия,/материала", "Завод-изготовитель", "Ед. изм.", "Кол.", "Масса ед.,/кг", "Примечание"];

type SpecRow = [number, string, string, string, string, string, string, string];
type SpecProps = { x: number; right: number; top: number; h1: number; h2: number; body: number; end: number; rows: SpecRow[]; heading?: string };

const SpecTable = ({ x, right, top, h1, h2, body, end, rows, heading }: SpecProps) => {
  const mid = (i: number) => x + (specCols[i] + (specCols[i + 1] ?? right - x)) / 2;
  return (
    <g>
      <path
        fill="none"
        stroke="#000"
        strokeWidth="1.500"
        d={specCols.slice(1).map((v) => `M${x + v} ${top}V${h2}`).join("") + `M${x} ${h1}H${right}M${x} ${h2}H${right}`}
      />
      <path
        fill="none"
        stroke="#000"
        strokeWidth="1.200"
        d={specCols.slice(1).map((v) => `M${x + v} ${body}V${end}`).join("") + rows.map((r) => `M${x} ${r[0]}H${right}`).join("") + `M${x + 12} ${end}H${right}`}
      />
      {specHead.map((h, i) =>
        h.split("/").map((t, j) => <Cell key={t} x={mid(i)} y={top + 5 + j * 4} $anchor="middle">{t}</Cell>)
      )}
      {specHead.map((h, i) => <Cell key={h} x={mid(i)} y={h2 - 1} $anchor="middle">{i + 1}</Cell>)}
      {heading && <Tiny x={x + 1} y={body - 8} $size={5}>{heading}</Tiny>}
      {rows.map((r, n) => (
        <g key={r[0]}>
          <Cell x={mid(0)} y={r[0] + 3} $anchor="middle">{n + 1}</Cell>
          <Cell x={mid(0)} y={r[0] + 6} $anchor="middle">ВК.СО</Cell>
          {r.slice(1).map((cell, i) =>
            String(cell).split("/").map((t, j) => {
              const left = i === 0 || i === 1 || i === 3;
              return (
                <Cell key={`${i}-${j}`} x={left ? x + specCols[i + 1] + 2 : mid(i + 1)} y={r[0] + 3 + j * 3} $anchor={left ? "start" : "middle"}>
                  {t}
                </Cell>
              );
            })
          )}
        </g>
      ))}
    </g>
  );
};

const spec1: SpecRow[] = [
  [765.7, "Счетчик крыльчатый/холодной воды одноструйный/Ду=15 мм, 2 МПа", "ВСХ-15", "", "Завод \"ПКФ\"/г. Москва", "шт", "1.000", "0.500"],
  [779, "Кран шаровой латунный/с внутренней резьбой/Ду=15", "11Б27П1 Ру16/Ду/ГОСТ 9544-75", "", "", "шт", "4.000", "0.170"],
  [792, "Водонагреватель/электрический настенный/накопительный", "SMIA/ТУ 3468-001/10 литров", "349100", "ЗАО \"Термо\"/г. Москва", "шт", "1.000", "7.500"],
  [805.3, "Кран пожарный в комплекте/с рукавом, стволом,/головкой соединительной/Ду = 50 мм, L=20 м/в шкафу пожарном навесном/размером 540х650х230/для огнетушителя, закрытый/с окном, красного цвета/в комплекте с рукавом/напорным, диаметром 51/и стволом РС-50", "ШПК-310 НЗК/ТУ 4854-002/в комплекте", "485484", "НПО \"Пульс\"/г. Москва", "к-т", "2.000", "24.00"],
  [841.3, "Вентиль запорный латунный/Ду=15 Ру1.0 МПа", "15Б3р/ТУ 26-07-1/89", "37 1211 001", "Бологовский/арматурный/завод", "шт", "2.000", "0.350"],
];
const spec2: SpecRow[] = [
  [765.3, "Клапан латунный муфтовый/Ду=50 Ру1.0 МПа", "15Б3рк, Ру10/ТУ 26-07-1427/87", "37 1211 0021", "Бологовский/арматурный/завод", "шт", "2.00", "1.400"],
  [775.3, "Кран шаровой проходной/Ду=15 Ру 1.6 МПа", "11Б27п1/ТУ 26-07-1/89", "371200", "Бологовский/арматурный/завод", "шт", "2.000", "0.250"],
  [785.3, "Смеситель для умывальника/См-УМ-НКСЗА", "См-УМ/ТУ 4951/89", "4951000", "Сантехнический/завод", "шт", "1.000", "1.240"],
  [795, "Умывальник полукруглый/со спинкой, кронштейнами/с сифоном бутылочным Ду 40", "УмПк/ТУ 4961/89", "4961000", "Лобненский завод/строительного/фаянса/г. Лобня", "к-т", "1.000", "12.00"],
  [808.3, "Сифон бутылочный", "СБУв ГОСТ 23289", "4941222", "", "шт", "1.000", "0.200"],
  [814.3, "Трап чугунный Ду50", "ТЧ-50 ГОСТ/1811-97", "", "АО \"Сантехлит\"/г. Людиново", "шт", "1.000", "4.800"],
];
const spec3: SpecRow[] = [
  [778, "Труба Ø15х2.8", "ГОСТ 3262-75", "", "", "м", "12.0", "1.280"],
  [785, "Труба водогазопроводная/стальная, неоцинкованная/обыкновенная, d=20/с антикоррозийным/покрытием/в изоляции", "ГОСТ 3262/Ру=10 МПа", "138500", "Челябинский/трубный завод/г. Челябинск", "м", "8.000", "1.660"],
  [807.3, "Отвод стальной 90° Ду50", "17375-2001/ГОСТ 17375", "", "АО/\"Трубодеталь\"", "шт", "4.000", "0.500"],
  [814.3, "Труба Ø 57х3.5", "ГОСТ 10704", "", "", "м", "24.0", "4.620"],
  [821, "Труба Ø 32х3.2", "ГОСТ 3262", "", "", "м", "6.000", "3.090"],
  [827, "Опора/Ду=15 ГОСТ 14911/неподвижная/с хомутом ГОСТ 24137", "", "1468000", "", "шт", "4.000", "2.130"],
  [843.7, "Опора/Ду=50 ГОСТ 14911-82/подвижная/ОПХ-100 ГОСТ 14911", "", "1468000", "", "шт", "6.000", "0.830"],
  [860, "Грунт/ГФ-021 ГОСТ 25129/эмаль/ПФ-115 ГОСТ 6465", "", "2312000", "Лакокрасочный/завод", "кг", "2.000", "1.000"],
  [876, "Краска/МА-15 ГОСТ 10503/масляная/белила ГОСТ 482", "", "2313000", "", "кг", "1.500", "1.000"],
];
const spec4: SpecRow[] = [
  [763.3, "Труба чугунная Ду50", "ГОСТ 6942", "", "", "м", "8.000", "5.500"],
  [770, "Отвод 135° Ду50", "ГОСТ 6942.10", "492000", "АО/\"Сантехлит\" завод", "шт", "2.000", "1.700"],
  [780, "Тройник 90° Ду50", "ГОСТ 6942.17", "492000", "ЗАО \"Сантехлит\"/г. Людиново", "шт", "2.000", "2.500"],
  [786.3, "Ревизия чугунная Ду50", "ГОСТ 6942.30", "", "", "шт", "1.000", "3.100"],
  [793, "Колено Ду50", "ГОСТ 6942.8", "", "", "шт", "1.000", "1.800"],
  [800, "Патрубок компенс. Ду50", "ГОСТ 6942.5", "", "", "шт", "1.000", "2.000"],
  [806.7, "Заглушка чугунная Ду50", "ГОСТ 6942.26", "", "", "шт", "1.000", "0.600"],
  [813, "Хомут/крепления трубопровода/серии/4.904-69 ГОСТ 24137", "", "1468000", "", "шт", "4.000", "0.300"],
  [829, "Крепления", "Ст3пс/ГОСТ 380-94", "", "", "кг", "5.100", "1.000"],
  [836, "Изоляция трубопроводов/цилиндры изоляционные/минераловатные d=57", "ГОСТ 23208", "", "", "м³", "0.150", "0.100"],
];

/* The plan is described in its own model units and mapped onto the sheet here. */
const px = (x: number) => 900 + x * 0.3775;
const py = (y: number) => 210 + y / 3;
const modelPath = (d: string) =>
  d.replace(/([ML])(\d+) (\d+)/g, (_, k, x, y) => `${k}${px(+x)} ${py(+y)}`)
    .replace(/H(\d+)(?=[A-Z]|$)/g, (_, x) => `H${px(+x)}`)
    .replace(/V(\d+)(?=[A-Z]|$)/g, (_, y) => `V${py(+y)}`);

const P = ({ d, w = 1.2, dash }: { d: string; w?: number; dash?: string }) => (
  <path d={modelPath(d)} fill="none" stroke="#000" strokeWidth={w} strokeDasharray={dash} />
);

const Axis = ({ x, y, t }: { x: number; y: number; t: string }) => (
  <g>
    <circle cx={px(x)} cy={py(y)} r="4.500" fill="none" stroke="#000" strokeWidth="1.400" />
    <Label x={px(x)} y={py(y) + 2.5}>{t}</Label>
  </g>
);

const Room = ({ x, y, t }: { x: number; y: number; t: string }) => (
  <g>
    <circle cx={px(x)} cy={py(y)} r="2.800" fill="none" stroke="#000" strokeWidth="1.400" />
    <Label x={px(x)} y={py(y) + 1.5} $size={4}>{t}</Label>
  </g>
);

const Elevation = ({ x, y, t, left }: { x: number; y: number; t: string; left?: boolean }) => {
  const X = px(x);
  const Y = py(y);
  const k = left ? -1 : 1;
  return (
    <g>
      <path d={`M${X - 5} ${Y}H${X + 5}M${X} ${Y}V${Y - 5}H${X + 12 * k}`} fill="none" stroke="#000" />
      <path d={`M${X} ${Y}L${X - 3} ${Y - 2}H${X + 3}Z`} />
      <Tiny x={X + 6 * k} y={Y - 5.5} $anchor="middle" $size={5}>{t}</Tiny>
    </g>
  );
};

const Note = ({ x, y, t, size = 4 }: { x: number; y: number; t: string; size?: number }) => (
  <Tiny x={px(x)} y={py(y)} $anchor="middle" $size={size}>{t}</Tiny>
);

const rooms = [
  ["1", "Электрощитовая", "73.8", "В"], ["2", "Аккумуляторная", "30.2", "А"], ["3", "Кислотная", "5.0", "Д"],
  ["4", "Дистилляторная", "3.6", "Д"], ["5", "Помещение КТП", "108.0", "В"], ["6", "Вентиляторная", "16.5", "Д"],
  ["7", "Коридор", "40.0", ""], ["8", "Тамбур", "4.0", ""],
];

const Plan = () => (
  <g>
    <Label x={px(466)} y={py(247)}>План на отм 0.000</Label>
    <P d="M239 283H794V505H782M250 293H782V500M239 283V733M250 293V722M782 535H790V731H782V535" />
    <P d="M478 288H545M565 288H632M652 288H719" w={3} />
    <P d="M465 293V492H472V293M465 520V543M472 520V543M705 552V722M711 552V722" />
    <P d="M472 463H732" w={4} />
    <path d={modelPath("M480 463H728")} stroke={c.canvas} strokeWidth="1" strokeDasharray="9 3 4 7" />
    <P d="M250 541H288V552H250V541M695 541H718V552H695V541M745 541H782V552H745V541" w={1.4} />
    <P d="M314 547H668" w={4} />
    <P d="M474 538H600M560 534H590" w={2} />
    <path d={modelPath("M318 547H660")} stroke={c.canvas} strokeWidth="1" strokeDasharray="3 6 8 4" />
    <P d="M239 728H345M405 728H548M610 728H790" w={4} />
    <path d={modelPath("M252 728H340M410 728H545M615 728H780")} stroke={c.canvas} strokeWidth="1.500" strokeDasharray="7 2" />
    <P d="M682 458V352H740M682 411H732M720 470V541M474 470V541M474 541H466" w={1.6} />
    <P d="M732 293V465" w={1.4} dash="6 3" />
    <P d="M778 300V460" w={2} />
    <P d="M745 310L765 310L765 345M700 352L775 352M735 360L745 372L770 372M775 340V400M790 360H830M790 402H850M790 416H850M750 330L760 340M720 362L745 368" w={1.8} dash="5 1" />
    <P d="M715 358H740M718 366H738M738 372H742" w={2.5} />
    <P d="M195 463H828M195 547H828M195 725H828" w={1} dash="12 2 2 2" />
    <P d="M223 288V728M195 290H245M248 733V868M780 733V868M244 803H784M794 283H852M847 283V440" />
    <P d="M220 292L227 284M220 467L227 459M220 551L227 543M220 729L227 721M244 807L252 799M776 807L784 799M843 287L851 279" w={1.8} />
    <P d="M820 358H850L880 322H947M820 402H850L880 378H940M820 416H850L878 463H940" />
    <Axis x={184} y={290} t="Г" /><Axis x={184} y={462} t="В" /><Axis x={184} y={546} t="Б" /><Axis x={182} y={724} t="А" />
    <Axis x={248} y={881} t="1" /><Axis x={779} y={881} t="2" />
    <Room x={359} y={377} t="1" /><Room x={539} y={352} t="2" /><Room x={628} y={505} t="7" /><Room x={489} y={631} t="5" />
    <Room x={750} y={628} t="6" /><Room x={697} y={372} t="4" /><Room x={708} y={433} t="3" /><Room x={773} y={304} t="8" />
    <rect x={px(388)} y={py(405)} width="13" height="5" />
    <P d="M700 385H718M705 395H718M740 322H764M740 335H762M745 345H760M770 455H790M770 470H790M476 475H495" w={3} />
    <Note x={677} y={326} t="Водонагреватель" /><P d="M640 328H705L709 352" />
    <Note x={497} y={490} t="ПК-2" /><Note x={690} y={524} t="ПК-1" /><Note x={576} y={536} t="Ø57х3.5" size={5} /><Note x={745} y={493} t="Ø32х3" /><Note x={705} y={538} t="Ø57" size={5} />
    <Note x={914} y={319} t="Выпуск К1-1" size={5} /><Note x={900} y={333} t="Ø50" />
    <Note x={914} y={376} t="Ввод В1-1" size={5} /><Note x={900} y={390} t="Ø32" />
    <Note x={914} y={461} t="Ввод В2-1" size={5} /><Note x={910} y={475} t="Ø57х3.5" />
    <Note x={538} y={802} t="12000" size={5} /><Note x={812} y={385} t="точка 1" />
    <P d="M217 305V332M217 475V500M217 560V588M841 318V336M841 365V388M841 395V410M841 424V440M802 338V365" w={3} />

    <Label x={px(395)} y={py(912)} $size={9}>В2</Label>
    <P d="M142 1063L185 1018L187 1060M142 1063H388L430 1018H490M370 1066V1098M536 968V925H602M572 925V963" w={1.4} />
    <P d="M490 1018L575 925" w={1.5} dash="4 1" />
    <P d="M522 968V1020L500 1050V1138H575M528 968V1020L505 1052L535 1040H735M500 1138L505 1110H517V1138M540 1140L558 1175H622" w={1.4} />
    <P d="M505 1120V1180" w={2} dash="5 2" />
    <Axis x={505} y={1193} t="Г" />
    <P d="M186 1055L198 1035M350 1098H370M560 963L568 980M534 955L530 972M516 985L524 1020" w={2.5} />
    <Elevation x={172} y={1018} t="+3.250" left /><Elevation x={212} y={1050} t="+1.350" /><Elevation x={336} y={1098} t="+1.350" left />
    <Elevation x={420} y={1018} t="+3.250" left /><Elevation x={590} y={920} t="+3.250" /><Elevation x={524} y={955} t="+1.350" left />
    <Elevation x={583} y={963} t="+1.350" /><Elevation x={486} y={1050} t="+0.800" left /><Elevation x={484} y={1088} t="+0.400" left />
    <Elevation x={562} y={1138} t="-2.000" />
    <Note x={175} y={1056} t="ПК-3" /><Note x={258} y={1062} t="Ø57х3.5" /><Note x={357} y={1113} t="ПК-2" /><Note x={461} y={1016} t="Ø57х3.5" />
    <Note x={504} y={970} t="ПК-1" /><Note x={552} y={922} t="Ø57х3" /><Note x={569} y={990} t="ПК-2" />
    <Note x={612} y={1038} t="Отвод 90°Ду50" /><Note x={628} y={1051} t="с монтажной резьбовой заглушкой" />
    <Note x={592} y={1174} t="Ввод В2-1" size={5} /><Note x={588} y={1187} t="Ø57х3.5" />

    <Label x={px(945)} y={py(900)} $size={9}>К1</Label>
    <P d="M895 942V1008H948M950 968V1038M935 968H960V982H940V968M903 970V1005M955 1038H1012M975 1040L990 1070H1054M955 1010H967V1030H952V1010M876 970L886 962L888 975H876" w={1.4} />
    <P d="M884 980L905 995M888 1000L905 985M905 1012H948M900 968V1012" w={2.5} />
    <P d="M954 1040V1075" w={2} dash="4 2" />
    <Axis x={954} y={1087} t="2" />
    <Elevation x={917} y={980} t="+0.800" /><Elevation x={893} y={1018} t="-0.300" left /><Elevation x={1003} y={1038} t="-1.500" />
    <Note x={882} y={940} t="Ø50" size={5} /><Note x={925} y={1008} t="Ø50х3" /><Note x={1022} y={1068} t="Выпуск К1-1" size={5} /><Note x={1012} y={1080} t="Ø50" />

    <Label x={px(1202)} y={py(543)} $size={8}>В1, Т3</Label>
    <P d="M1038 588H1130L1108 603M1140 640V588H1205M1182 588L1170 605V655L1145 680V742H1222M1190 640H1212V670M1200 618V680M1195 630H1208M1145 680L1180 692H1373M1180 745L1198 780H1264M1148 715H1163V740H1148V715" w={1.4} />
    <circle cx={px(1105)} cy={py(609)} r="2.800" fill="none" stroke="#000" strokeWidth="1.200" />
    <P d="M1105 618V640M1112 655H1135M1148 650L1160 665M1115 662L1118 650M1138 615V650M1195 628H1208M1195 668H1208M1175 640L1190 640M1160 662L1185 645" w={2.5} />
    <Elevation x={1195} y={585} t="+2.650" /><Elevation x={1089} y={643} t="+1.350" left /><Elevation x={1228} y={645} t="+1.350" />
    <Elevation x={1104} y={677} t="+0.800" left /><Elevation x={1132} y={690} t="+0.400" left /><Elevation x={1207} y={742} t="-2.000" />
    <Note x={1085} y={586} t="Водонагреватель" size={5} /><Note x={1158} y={586} t="Ø15" /><Note x={1232} y={658} t="точка 1" />
    <Note x={1250} y={690} t="Отвод 90°Ду32" /><Note x={1270} y={704} t="с монтажной резьбовой заглушкой" />
    <Note x={1230} y={779} t="Ввод В1-1" size={5} /><Note x={1216} y={790} t="Ø32" />

    <P d="M1228 224H1538M1228 269H1538M1228 293H1538M1228 317H1538M1228 340H1538M1228 364H1538M1228 388H1538M1228 411H1538M1228 434H1538M1228 455H1538M1228 224V455M1267 224V455M1469 224V455M1521 224V455M1228 258H1267" w={1.3} />
    <Note x={1450} y={219} t="Экспликация помещений" />
    <Note x={1247} y={236} t="Номер" /><Note x={1247} y={250} t="по" /><Note x={1247} y={264} t="плану" />
    <Note x={1378} y={250} t="Наименование" /><Note x={1495} y={242} t="Площ." /><Note x={1492} y={258} t="м²" />
    {rooms.map((r, i) => (
      <g key={r[0]}>
        <Note x={1246} y={286 + i * 23.5} t={r[0]} size={5} />
        <Tiny x={px(1274)} y={py(288 + i * 23.5)} $size={5}>{r[1]}</Tiny>
        <Note x={1491} y={287 + i * 23.5} t={r[2]} size={5} />
        <Note x={1530} y={287 + i * 23.5} t={r[3]} size={5} />
      </g>
    ))}
    <path d="M1476 286H1480M1476 290H1480M1476 294H1480M1476 298H1480" stroke="#000" strokeWidth="2" />
  </g>
);

const Sheets = () => (
  <Drawing role="img" aria-label="Чертёж">
    <g transform="translate(-4 -177)">
      <Frame outer={[7, 387.5, 208.7, 668]} inner={[28.5, 395.5, 202.5, 661.5]} />
      <path fill="none" stroke="#000" strokeWidth="1.300" d="M30.500 409.500H202M30.500 424.500H202M30.500 434.500H202M30.500 442H202M30.500 450H202M30.500 458H202M30.500 466H202M30.500 474H202M30.500 481.700H202M30.500 489.700H202M30.500 497.700H202M30.500 505.700H202M43.500 409V506M176.500 409V506" />
      <Lines list={sheet1} />
      <BigStamp x={35.5} y={610.5} page="1.1" bars={[[75.5, 41, 28, 5]]} />

      <Frame outer={[232.5, 387.5, 434, 668]} inner={[250.5, 396.5, 427.5, 661.5]} />
      <path fill="none" stroke="#000" strokeWidth="1.300" d="M253.500 427.500H427M313.500 437.500H372.500M253.500 447.500H427M253.500 455.500H427M253.500 463.500H427M253.500 471.500H427M253.500 479.500H427M253.700 427V480M286.700 427V480M313.700 427V480M330 437V480M345.700 437V480M359 437V480M372.500 427V480M397 427V480" />
      <Lines list={sheet2} />
      <SmallStamp x={253.5} y={646.5} page="1.2" />

      <Frame outer={[457.5, 387.5, 659.5, 668]} inner={[475.5, 396.5, 652.5, 660.5]} />
      <Lines list={sheet3} />
      <SmallStamp x={478.5} y={645.5} page="1.3" />

      <Frame outer={[682.7, 387.5, 884, 668]} inner={[700.5, 397.5, 878.5, 661.5]} />
      <Lines list={sheet4} />
      <SmallStamp x={704.5} y={646.5} page="1.4" />

      <Frame outer={[907.5, 262, 1484, 668]} inner={[943.8, 276.5, 1480.5, 654.5]} />
      <Plan />
      <BigStamp x={1313.5} y={603.5} page="2" bars={[[71, 39, 36, 4], [62, 43, 54, 4]]} />

      <Frame outer={[7, 720.5, 287, 921]} inner={[36.7, 726.5, 280, 907.5]} />
      <SpecTable x={39.5} right={280} top={732.7} h1={752.7} h2={757.3} body={765.7} end={854.3} rows={spec1} />
      <BigStamp x={113.5} y={856.5} page="1" bars={[[61, 42, 56, 4]]} />

      <Frame outer={[310.5, 719.5, 592, 921]} inner={[344.8, 728.5, 584.8, 908.5]} />
      <SpecTable x={346.4} right={584.8} top={729} h1={746.7} h2={751.7} body={762.3} end={821} rows={spec2} />
      <path d="M346 762.300H584.800" stroke="#000" />
      <SmallStamp x={410.8} y={893.8} page="2" />

      <Frame outer={[615.6, 720.5, 896, 921]} inner={[649.8, 728, 889, 908]} />
      <SpecTable x={651} right={889} top={728.3} h1={746} h2={751} body={778} end={891.7} rows={spec3} heading="ТРУБЫ И МАТЕРИАЛЫ" />
      <SmallStamp x={715.5} y={893.3} page="3" />

      <Frame outer={[919.8, 720.7, 1199.8, 921]} inner={[953.5, 729.7, 1194, 910]} />
      <SpecTable x={955.3} right={1194} top={730} h1={748.3} h2={752.7} body={763.3} end={849} rows={spec4} />
      <SmallStamp x={1020.5} y={895.5} page="4" />

      <path fill="none" stroke="#1b2022" strokeWidth="1.200" d="M24.500 935V984.500H75M20.500 979.500H29.500V988.500H20.500ZM26 918L32.500 924.500L39 918M32.500 924.500V931M79 970L92 983M92 970L79 983" />
      <path fill="none" stroke="#1b2022" d="M1449.500 917V963M1449.500 970V1006M1401 966.500H1446M1453 966.500H1488M1446.500 963.500H1452.500V969.500H1446.500Z" />
    </g>
  </Drawing>
);

const ViewCube = () => (
  <CubeWrap>
    <svg width="140" height="140" viewBox="0 0 140 140" role="img" aria-label="Видовой куб">
      <circle cx="70" cy="70" r="52" fill="none" stroke="rgba(240,240,245,0.12)" strokeWidth="9" />
      <rect x="44.500" y="45.500" width="51" height="51" fill="rgba(228,230,233,0.75)" stroke="#8d9295" />
      <rect x="55" y="57" width="30" height="28" fill="rgba(205,207,210,0.6)" />
      <CubeText x="70" y="76" $size={14} fill="#6c6f72">Сверху</CubeText>
      <g fill="rgba(225,229,231,0.5)" stroke="#a3a7aa" strokeWidth="0.800">
        <CubeText x="70" y="22">С</CubeText>
        <CubeText x="13" y="79">З</CubeText>
        <CubeText x="126" y="78">В</CubeText>
        <CubeText x="70" y="135">Ю</CubeText>
      </g>
    </svg>
  </CubeWrap>
);

const navStroke = "#b0b6b8";
const Nav = () => (
  <NavBar aria-label="Панель навигации">
    <NavBtn $h={24} aria-label="Штурвал"><Icon s={24} stroke={navStroke}><circle cx="12" cy="12" r="10.500" /><circle cx="12" cy="12" r="5.500" strokeWidth="1.500" /><path d="M5 20L8 16M19 20L16 16" /></Icon></NavBtn>
    <NavBtn $h={16} aria-label="Параметры штурвала"><Caret w={4} color={navStroke} /></NavBtn>
    <NavBtn $h={30} aria-label="Панорамирование"><Icon s={24} stroke={navStroke}><path d="M8 22C5 19 3 16 1 13C3 11 5 12 7 15L5 5C7 3 8 5 9 11L9 2C11 0 12 2 12 10L14 2C16 1 17 3 15 11L19 5C21 5 21 7 18 13C18 18 17 20 16 22Z" /></Icon></NavBtn>
    <NavBtn $h={26} aria-label="Показать до границ"><Icon s={24} stroke={navStroke}><path d="M2 2L15 15M2 15L15 2M1 6V1H6M11 1H16V6M1 11V16H6" /><circle cx="16" cy="16" r="4.500" /><path d="M19 19L23 23" strokeWidth="2" /></Icon></NavBtn>
    <NavBtn $h={10} aria-label="Параметры зума"><Caret w={4} color={navStroke} /></NavBtn>
    <NavBtn $h={28} aria-label="Орбита"><Icon s={24} stroke={navStroke}><path d="M9 23V6H6L11.500 1L17 6H14V23Z" /><path d="M9 9C-1 11 0 16 9 17M14 9C24 11 24 15 17 17" strokeWidth="1.500" /><path d="M5 14L9 17L5 20" /></Icon></NavBtn>
    <NavBtn $h={8} aria-label="Параметры орбиты"><Caret w={4} color={navStroke} /></NavBtn>
    <NavBtn $h={34} aria-label="ShowMotion"><Icon s={24} stroke={navStroke}><path d="M1 2H7V8H1ZM9 2H15V8H9ZM17 2H23V8H17ZM1 11H16V23H1ZM6 14V20L11 17Z" /></Icon></NavBtn>
  </NavBar>
);

/* ---------- data ---------- */

const quick: [string, React.ReactNode, number][] = [
  ["Создать", icons.newFile, 24], ["Открыть", icons.open, 24], ["Сохранить", icons.save, 24], ["Сохранить как", icons.saveAs, 24],
  ["Открыть из веб", icons.openMobile, 24], ["Сохранить в веб", icons.saveMobile, 24], ["Печать", icons.print, 24], ["Отменить", icons.undo, 26],
  ["Список отмены", <Caret w={5} />, 12], ["Повторить", icons.redo, 24], ["Список повтора", <Caret w={5} color="#8d939b" />, 12], ["Адаптация", icons.custom, 18],
];

const tabs = ["Главная", "Вставка", "Аннотации", "Параметризация", "3D-инструменты", "Визуализация", "Вид", "Управление", "Вывод", "Надстройки", "Совместная работа", "Рекомендованные приложения", "Express Tools", "Raster Tools"];

const Big = ({ w, icon, label, caret }: { w: number; icon: React.ReactNode; label: string; caret?: boolean }) => (
  <BigBtn $w={w}>
    {icon}
    <BigLabel>{label}</BigLabel>
    {caret && <Caret w={5} />}
  </BigBtn>
);

const Small = ({ icon, label, caret }: { icon: React.ReactNode; label: string; caret?: boolean }) => (
  <SmallBtn aria-label={label}>
    {icon}
    {caret && <Caret w={5} />}
  </SmallBtn>
);

const RibbonPanel = ({ w, title, caret = true, launcher, children }: { w: number; title: string; caret?: boolean; launcher?: boolean; children: React.ReactNode }) => (
  <Panel $w={w}>
    <PanelBody>{children}</PanelBody>
    <PanelTitle>
      {title}
      {caret && <Caret w={8} />}
      {launcher && <Launcher><Icon s={6}><path d="M0 0L5 5M5 1V5.500H1" /></Icon></Launcher>}
    </PanelTitle>
  </Panel>
);

const statusIcons = {
  grid: <Icon><path d="M4.500 0V16M8.500 0V16M12.500 0V16M1 4.500H16M1 8.500H16M1 12.500H16" strokeWidth="1.300" /></Icon>,
  snap: <Icon><path d="M3 3H15M3 8H15M3 13H15" strokeWidth="2" strokeDasharray="2 3" /></Icon>,
  ortho: <Icon><path d="M1 0V15H16M1 9H7V15" strokeWidth="1.200" /></Icon>,
  polar: <Icon stroke="#fff"><path d="M13 4A6.500 6.500 0 1 0 14 10M7.500 8.500H16M7.500 8.500L14 1.500M11 5L12 8.500" strokeWidth="1.200" /></Icon>,
  iso: <Icon><path stroke={c.red} d="M2 1L14 15" /><path stroke={c.green} d="M8.500 0V16" strokeWidth="1.200" /><rect x="7" y="7" width="3" height="3" fill="#fff" stroke="none" /></Icon>,
  track: <Icon stroke="#fff"><path d="M15 2L1 14.500H16" strokeWidth="1.300" /><rect x="7" y="7" width="3" height="3" fill="#fff" stroke="none" /></Icon>,
  osnap: <Icon s={18} stroke="#fff"><path d="M7 4H16V16.500H4V8" strokeWidth="1.300" /><rect x="1.500" y="1.500" width="5" height="5" /></Icon>,
  lw: <Icon><path {...solid} d="M0 1H7V2H0ZM8 1H16V3H8ZM0 5H16V7H0ZM0 8H9V10H0ZM10 9H16V10H10ZM0 12H16V15H0Z" /></Icon>,
  transp: <Icon s={18} stroke="#fff"><path d="M1 4.500H7M4 1.500V8M8 4H14V7M4 9V13H7" /><rect x="6" y="7" width="10" height="10" fill="#fff" stroke="none" /></Icon>,
  dyn: <Icon><path d="M3 13V2M1 4L3 1L5 4M3 13H14M12 11L15 13L12 15" strokeWidth="1.200" /><path {...solid} d="M9 5L12 1V5H14L10 10V6H8Z" /></Icon>,
  anno: (extra: React.ReactNode) => <Icon s={18}><path {...solid} d="M7 1C9 3 9 6 10 9L14 16L8.500 12V17H6.500V12L1 16L5 9C5 6 5 3 7 1Z" />{extra}</Icon>,
  gear: <Icon><circle cx="8" cy="8" r="4.500" strokeWidth="3.500" /><circle cx="8" cy="8" r="7" strokeWidth="2" strokeDasharray="2.750 2.750" /></Icon>,
  plus: <Icon><path strokeWidth="2" d="M8 0V16M0 8H16" /></Icon>,
  isolate: <Icon><path d="M1.500 0.500H6.500V6H1.500ZM4 14.500L7 9L10 14.500Z" /><circle cx="12.500" cy="7" r="3" /></Icon>,
  hw: <Icon><path {...blueFill} d="M1 0H14V9H1Z" /><path stroke="#285a93" d="M1 3H8M4 0V8" /><path fill="#f0a830" stroke="none" d="M1 10H9V15H1ZM11 7L16 16H6Z" /><path stroke="#222" d="M11 10V13M11 14V15" /></Icon>,
  clean: <Icon><path fill="#fff" stroke="none" d="M0 0H14V13H0Z" /><path stroke="#4a7fb5" d="M1 9L5 4L9 9L13 5" /><path fill="#e8743a" stroke="none" d="M10.500 6L16 16H5Z" /><path stroke="#fff" d="M10.500 10V13M10.500 14V15" /></Icon>,
  full: <Icon><path d="M0.500 2.500H15.500V13.500H0.500ZM9 7L12 5M12 7V4.500H9.500M7 9L4 11M4 9V11.500H6.500" /></Icon>,
  menu: <Icon><path strokeWidth="2" d="M0 3H16M0 8H16M0 13H16" /></Icon>,
};

type StatusItem = [number, string, React.ReactNode, boolean?];
const status: StatusItem[][] = [
  [[57, "Пространство модели", "МОДЕЛЬ"]],
  [[24, "Сетка", statusIcons.grid], [25, "Шаг", statusIcons.snap], [16, "Параметры шага", <Caret w={6} />]],
  [[25, "Орто", statusIcons.ortho], [23, "Полярное отслеживание", statusIcons.polar, true], [17, "Параметры", <Caret w={6} />], [22, "Изометрия", statusIcons.iso], [17, "Параметры изометрии", <Caret w={6} />], [22, "Отслеживание привязки", statusIcons.track, true]],
  [[23, "Объектная привязка", statusIcons.osnap, true], [15, "Параметры привязки", <Caret w={6} />]],
  [[24, "Вес линий", statusIcons.lw]],
  [[22, "Прозрачность", statusIcons.transp, true]],
  [[27, "Динамическая ПСК", statusIcons.dyn]],
  [[22, "Видимость аннотаций", statusIcons.anno(<circle cx="14" cy="4" r="2.500" />), true], [25, "Автомасштаб", statusIcons.anno(<path {...solid} d="M12 5L15 1V4H17L13 8V5Z" />)], [24, "Масштаб аннотаций", statusIcons.anno(null)], [33, "Масштаб 1:1", <>1:1<Caret w={6} /></>]],
  [[24, "Рабочее пространство", statusIcons.gear], [16, "Параметры пространства", <Caret w={6} />]],
  [[24, "Монитор аннотаций", statusIcons.plus]],
  [[25, "Изоляция объектов", statusIcons.isolate]],
  [[25, "Производительность", statusIcons.hw], [25, "Доверенные", statusIcons.clean]],
  [[24, "Очистить экран", statusIcons.full], [26, "Адаптация", statusIcons.menu]],
];

export default function App() {
  return (
    <Window>
      <GlobalStyle />
      <Header>
        <AppButton aria-label="Меню приложения"><AcadLogo /></AppButton>
        <TitleRow>
          <QuickBar>
            {quick.map(([label, icon, w]) => <ToolBtn key={label} $w={w} aria-label={label}>{icon}</ToolBtn>)}
          </QuickBar>
          <Title><span>Autodesk AutoCAD 2020</span><span>Проект системы водоснабжения и канализации энергоблока.dwg</span></Title>
          <TitleTools>
            <Icon s={5}><path {...solid} d="M0 0L4 2.500L0 5Z" /></Icon>
            <SearchBox type="text" aria-label="Поиск" placeholder="Введите ключевое слово/фразу" />
            <ToolBtn aria-label="Найти"><Icon><path {...solid} d="M2 2H6V4H7V3H9V4H10V2H14L15 14H10V8H6V14H1Z" /></Icon></ToolBtn>
            <SignIn>
              <Icon><circle cx="9" cy="5" r="4.500" {...solid} /><path {...solid} d="M6 8H12V11L16 12V15H2V12L6 11Z" /></Icon>
              <span>Вход в службы</span>
              <Caret w={5} />
            </SignIn>
            <ToolBtn $w={32} aria-label="App Store"><Icon><path d="M0 2H3L5 10H13L15 4H4" strokeWidth="1.500" /><path {...solid} d="M4 4H15L13 9H6Z" /><circle cx="6" cy="13.500" r="1" {...solid} /><circle cx="12" cy="13.500" r="1" {...solid} /></Icon></ToolBtn>
            <ToolBtn $w={16} aria-label="Autodesk"><Icon><path strokeWidth="1.600" d="M8 3L13 12H3Z" /><circle cx="8" cy="3" r="2" {...solid} /><circle cx="3" cy="12" r="2" {...solid} /><circle cx="13" cy="12" r="2" {...solid} /></Icon></ToolBtn>
            <ToolBtn $w={13} aria-label="Список Autodesk"><Caret w={5} /></ToolBtn>
            <Divider />
            <ToolBtn $w={18} aria-label="Справка"><svg width="14" height="14" viewBox="0 0 14 14"><circle cx="7" cy="7" r="7" fill="#f2f4f8" /><text x="7" y="11" textAnchor="middle" fontSize="11" fontWeight="700" fill="#2c5aa8">?</text></svg></ToolBtn>
            <ToolBtn $w={16} aria-label="Список справки"><Caret w={5} /></ToolBtn>
            <WinButtons>
              <ToolBtn $w={24} aria-label="Свернуть"><Icon s={12}><path strokeWidth="2" d="M2 10H10" /></Icon></ToolBtn>
              <ToolBtn $w={25} aria-label="Развернуть"><Icon s={12}><path d="M0.500 1.500H11.500V11.500H0.500Z" /><path d="M0 2H12" strokeWidth="2" /></Icon></ToolBtn>
              <ToolBtn $w={24} aria-label="Закрыть"><Icon s={12}><path strokeWidth="2" d="M1 1L11 11M11 1L1 11" /></Icon></ToolBtn>
            </WinButtons>
          </TitleTools>
        </TitleRow>
        <TabRow>
          {tabs.map((t, i) => <RibbonTab key={t} $on={i === 0}>{t}</RibbonTab>)}
          <BadgeTab aria-label="Вид ленты">
            <svg width="13" height="8" viewBox="0 0 13 8"><rect width="13" height="7" rx="1" fill={c.icon} /><path d="M4 5H9L6.500 2Z" fill="#333" /></svg>
            <Caret w={5} />
          </BadgeTab>
        </TabRow>
      </Header>

      <Ribbon>
        <RibbonPanel w={260} title="Рисование">
          <Big w={56} icon={icons.line} label="Отрезок" />
          <Big w={64} icon={icons.polyline} label="Полилиния" />
          <Big w={52} icon={icons.circle} label="Круг" caret />
          <Big w={46} icon={icons.arc} label="Дуга" caret />
          <SmallGrid $cols="36px">
            <Small icon={icons.rect} label="Прямоугольник" caret />
            <Small icon={icons.ellipse} label="Эллипс" caret />
            <Small icon={icons.hatch} label="Штриховка" caret />
          </SmallGrid>
        </RibbonPanel>
        <RibbonPanel w={132} title="Редактирование">
          <SmallGrid $cols="30px 30px 40px 28px" $pad={2}>
            <Small icon={icons.move} label="Перенести" /><Small icon={icons.rotate} label="Повернуть" /><Small icon={icons.trim} label="Обрезать" caret /><Small icon={icons.erase} label="Стереть" />
            <Small icon={icons.copy} label="Копировать" /><Small icon={icons.mirror} label="Зеркало" /><Small icon={icons.fillet} label="Сопряжение" caret /><Small icon={icons.explode} label="Расчленить" />
            <Small icon={icons.stretch} label="Растянуть" /><Small icon={icons.scale} label="Масштаб" /><Small icon={icons.array} label="Массив" caret /><Small icon={icons.offset} label="Подобие" />
          </SmallGrid>
        </RibbonPanel>
        <RibbonPanel w={139} title="Аннотации">
          <Big w={54} icon={icons.text} label="Текст" caret />
          <Big w={46} icon={icons.dimension} label="Размер" />
          <SmallGrid $cols="36px">
            <Small icon={icons.linear} label="Линейный" caret /><Small icon={icons.leader} label="Выноска" caret /><Small icon={icons.table} label="Таблица" />
          </SmallGrid>
        </RibbonPanel>
        <RibbonPanel w={270} title="Слои">
          <Big w={60} icon={icons.layerProps} label={"Свойства\nслоя"} />
          <Column>
            <Combo $w={208}>
              <Icon><Bulb x={8} y={6} fill={c.yellow} r={5} /></Icon>
              <Icon><Burst x={8} y={8} r={7.500} /><circle cx="8" cy="8" r="4.500" {...yellowFill} /></Icon>
              <Icon><g transform="scale(1.500)"><Lock x={0} y={0} fill={c.yellow} open /></g></Icon>
              <Swatch />
              <Select aria-label="Слой"><option>По умолчанию</option></Select>
              <Caret w={8} />
            </Combo>
            <SmallGrid $cols="repeat(5, 24px)">
              {layerIcons.map((ic, i) => <Small key={i} icon={<Icon>{ic}</Icon>} label={`Слой, команда ${i + 1}`} />)}
            </SmallGrid>
          </Column>
        </RibbonPanel>
        <RibbonPanel w={85} title="Блок">
          <Big w={48} icon={icons.blockInsert} label="Вставка" caret />
          <SmallGrid $cols="36px">
            <Small icon={icons.blockNew} label="Создать блок" /><Small icon={icons.blockEdit} label="Редактор блоков" /><Small icon={icons.blockAttr} label="Атрибуты" caret />
          </SmallGrid>
        </RibbonPanel>
        <RibbonPanel w={242} title="Свойства" launcher>
          <Big w={84} icon={icons.match} label={"Копирование\nсвойств"} />
          <SmallGrid $cols="20px">
            <RowIcon>{icons.color}</RowIcon>
            <RowIcon>{icons.weight}</RowIcon>
            <RowIcon>{icons.ltype}</RowIcon>
          </SmallGrid>
          <Column>
            <Combo $w={136}><Swatch $inset /><Select aria-label="Цвет"><option>ПоСлою</option></Select><Caret w={8} /></Combo>
            <Combo $w={136}><LineSample /><Select aria-label="Вес линий"><option>0.00 мм</option></Select><Caret w={8} /></Combo>
            <Combo $w={136}><LineSample /><Select aria-label="Тип линий"><option>SolidLi...</option></Select><Caret w={8} /></Combo>
          </Column>
        </RibbonPanel>
        <RibbonPanel w={74} title="Группы">
          <Big w={48} icon={icons.group} label="Группа" />
          <SmallGrid $cols="24px">
            <Small icon={icons.ungroup} label="Разгруппировать" /><Small icon={icons.groupEdit} label="Редактировать группу" /><Small icon={icons.groupSel} label="Выбор группы" />
          </SmallGrid>
        </RibbonPanel>
        <RibbonPanel w={105} title="Утилиты">
          <Big w={79} icon={icons.ruler} label="Измерить" caret />
          <SmallGrid $cols="24px">
            <Small icon={icons.quickSel} label="Быстрый выбор" /><Small icon={icons.selAll} label="Выбрать все" /><Small icon={icons.calc} label="Калькулятор" />
          </SmallGrid>
        </RibbonPanel>
        <RibbonPanel w={99} title="Буфер обмена" caret={false}>
          <Big w={73} icon={icons.paste} label="Вставить" caret />
          <SmallGrid $cols="24px">
            <Small icon={icons.cut} label="Вырезать" /><Small icon={icons.copyClip} label="Копировать в буфер" />
          </SmallGrid>
        </RibbonPanel>
        <ViewPanel>
          <ViewTop>{icons.view}<span>Вид</span></ViewTop>
          <Caret w={7} />
        </ViewPanel>
      </Ribbon>

      <FileTabs>
        <FileTab $w={127}>Начало</FileTab>
        <FileTab $w={274} $on>
          Проект системы вод...зации энергоблока
          <Icon s={10} stroke="#9aa0a8"><path strokeWidth="2" d="M1 1L9 9M9 1L1 9" /></Icon>
        </FileTab>
        <AddTab $h={20} aria-label="Новый чертёж"><Icon s={8} stroke="#9aa0a8"><path strokeWidth="2" d="M4 0V8M0 4H8" /></Icon></AddTab>
      </FileTabs>

      <Canvas>
        <Sheets />
        <ViewLabel>[−][Сверху][2D-каркас]</ViewLabel>
        <DocButtons>
          <DocBtn aria-label="Свернуть чертёж"><Icon s={14} stroke="#5d6062"><path d="M1.500 8.500H12.500V12.500H1.500Z" fill="#eee" /></Icon></DocBtn>
          <DocBtn aria-label="Восстановить чертёж"><Icon s={14} stroke="#5d6062"><path d="M4.500 1.500H12.500V10H10.500V4H4.500Z" fill="#eee" /><path d="M1.500 4.500H10V12.500H1.500Z" fill="#eee" /><path d="M4.500 7H7.500V10H4.500Z" /></Icon></DocBtn>
          <DocBtn aria-label="Закрыть чертёж"><Icon s={14} stroke="#5d6062"><path d="M2 2H6L7 4L8 2H12V4L10 7L12 10V12H8L7 10L6 12H2V10L4 7L2 4Z" fill="#eee" /><path d="M4 3.500L10 10.500M10 3.500L4 10.500" strokeWidth="1.500" /></Icon></DocBtn>
        </DocButtons>
        <ViewCube />
        <Ucs>МСК <Icon s={9} stroke="#a3a7aa"><path d="M1 2H8L4.500 7Z" /></Icon></Ucs>
        <Nav />
        <CommandDock>
          <CommandLine>
            <CommandGrip>
              <svg width="6" height="18" viewBox="0 0 6 18" aria-hidden="true"><path d="M1 1V18M3 1V18M5 1V18" stroke="#e2e4e8" strokeDasharray="1 1" /></svg>
              <Icon s={10} stroke="#f0f0f0"><path strokeWidth="2" d="M1 1L9 9M9 1L1 9" /></Icon>
              <Icon s={14}><path fill="#f0f0f0" stroke="none" d="M0 12L7 6C6 3 8 0 12 0L10 3L11 4L14 2C14 6 11 8 8 7L2 14Z" /></Icon>
            </CommandGrip>
            <Icon stroke="#5d6062"><path d="M0.500 2.500H15.500V13.500H0.500ZM0 4H16M3 7L5 9L3 11M6 11.500H10" /></Icon>
            <Caret w={8} color="#6d7072" />
            <CommandInput placeholder="Введите команду" aria-label="Командная строка" />
            <DocBtn aria-label="История команд"><Caret w={7} color="#7f8385" up /></DocBtn>
          </CommandLine>
        </CommandDock>
      </Canvas>

      <StatusBar>
        <LayoutTabs>
          <LayoutTab $on>Модель</LayoutTab>
          <LayoutTab>Layout1</LayoutTab>
          <LayoutTab>Layout2</LayoutTab>
          <AddTab $h={18} aria-label="Новый лист"><Icon s={8} stroke="#a8adb4"><path strokeWidth="2" d="M4 0V8M0 4H8" /></Icon></AddTab>
        </LayoutTabs>
        <StatusTools>
          {status.map((g, i) => (
            <StatusGroup key={i}>
              {g.map(([w, label, node, on]) => <StatusBtn key={label} $w={w} $on={on} aria-label={label}>{node}</StatusBtn>)}
            </StatusGroup>
          ))}
        </StatusTools>
      </StatusBar>
    </Window>
  );
}
